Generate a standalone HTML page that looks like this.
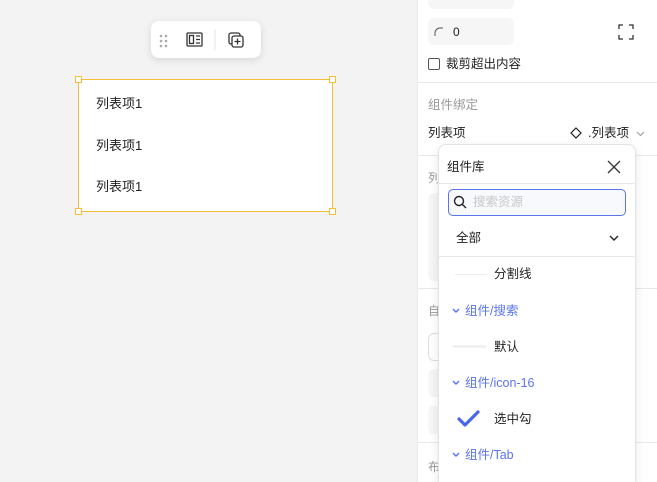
<!DOCTYPE html><html><head><style>
*{margin:0;padding:0;box-sizing:border-box}
html{width:657px;height:482px;overflow:hidden}
body{width:657px;height:482px;overflow:hidden;background:#f3f3f3;font-family:"Liberation Sans","Noto Sans CJK SC",sans-serif;font-size:12px;line-height:14px;color:#222;position:relative}
.a{position:absolute}
svg{display:block}
</style></head><body>
<div class="a" style="left:151px;top:21px;width:110px;height:37px;background:#fff;border-radius:8px;box-shadow:0 2px 8px rgba(0,0,0,.12)"></div>
<svg class="a" style="left:151px;top:21px" width="110" height="37">
<g fill="#aaa"><circle cx="10" cy="15" r="1.3"/><circle cx="15" cy="15" r="1.3"/><circle cx="10" cy="20" r="1.3"/><circle cx="15" cy="20" r="1.3"/><circle cx="10" cy="25" r="1.3"/><circle cx="15" cy="25" r="1.3"/></g>
<g fill="none" stroke="#333" stroke-width="1.3"><rect x="36" y="12" width="15" height="13" rx="1"/><rect x="38.5" y="14.5" width="4" height="8"/><path d="M45 15h4M45 18.5h4M45 22h4"/>
<rect x="78" y="12" width="11" height="11" rx="2"/><rect x="81" y="15" width="11" height="11" rx="2" fill="#fff"/><path d="M86.5 17.5v6M83.5 20.5h6"/></g>
<path d="M64 8v21" stroke="#e5e5e5"/></svg>
<div class="a" style="left:78px;top:79px;width:255px;height:133px;background:#fff;border:1px solid #f5bd3a"></div>
<div class="a" style="left:75px;top:76px;width:7px;height:7px;background:#fff;border:1px solid #f5bd3a"></div>
<div class="a" style="left:329px;top:76px;width:7px;height:7px;background:#fff;border:1px solid #f5bd3a"></div>
<div class="a" style="left:75px;top:208px;width:7px;height:7px;background:#fff;border:1px solid #f5bd3a"></div>
<div class="a" style="left:329px;top:208px;width:7px;height:7px;background:#fff;border:1px solid #f5bd3a"></div>
<div class="a" style="left:96px;top:97px;font-size:13px">列表项1</div>
<div class="a" style="left:96px;top:139px;font-size:13px">列表项1</div>
<div class="a" style="left:96px;top:180px;font-size:13px">列表项1</div>

<div class="a" style="left:417px;top:0;width:240px;height:482px;background:#fff;border-left:1px solid #e8e8e8"></div>
<div class="a" style="left:428px;top:0;width:86px;height:9px;background:#f6f6f7;border-radius:0 0 6px 6px"></div>
<div class="a" style="left:428px;top:18px;width:86px;height:27px;background:#f6f6f7;border-radius:6px"></div>
<svg class="a" style="left:434px;top:27px" width="10" height="10"><path d="M1 9V6a5 5 0 0 1 5-5h3" stroke="#555" fill="none"/></svg>
<div class="a" style="left:453px;top:25px;font-size:12px">0</div>
<svg class="a" style="left:618px;top:24px" width="16" height="16"><path d="M1 5V1h4M11 1h4v4M15 11v4h-4M5 15H1v-4" stroke="#333" fill="none" stroke-width="1.3"/></svg>
<div class="a" style="left:428px;top:58px;width:12px;height:12px;border:1px solid #555;border-radius:2px"></div>
<div class="a" style="left:446px;top:57px;font-size:12.5px">裁剪超出内容</div>
<div class="a" style="left:418px;top:82px;width:239px;height:1px;background:#e8e8e8"></div>
<div class="a" style="left:428px;top:98px;color:#999;font-size:12.5px">组件绑定</div>
<div class="a" style="left:428px;top:126px;font-size:12.5px">列表项</div>
<svg class="a" style="left:570px;top:127px" width="12" height="12"><path d="M6 1l5 5-5 5-5-5z" stroke="#222" fill="none" stroke-width="1.2"/></svg>
<div class="a" style="left:588px;top:126px;font-size:12.5px">.列表项</div>
<svg class="a" style="left:636px;top:131px" width="9" height="6"><path d="M1 1l3.5 3.5L8 1" stroke="#999" fill="none"/></svg>
<div class="a" style="left:418px;top:155px;width:239px;height:1px;background:#e8e8e8"></div>
<div class="a" style="left:428px;top:171px;color:#999">列</div>
<div class="a" style="left:428px;top:193px;width:203px;height:88px;background:#f6f6f7;border-radius:6px"></div>
<div class="a" style="left:418px;top:288px;width:239px;height:1px;background:#e8e8e8"></div>
<div class="a" style="left:428px;top:304px;color:#999">自</div>
<div class="a" style="left:428px;top:333px;width:20px;height:28px;border:1px solid #ddd;border-radius:6px"></div>
<div class="a" style="left:428px;top:369px;width:20px;height:28px;background:#f6f6f7;border-radius:6px"></div>
<div class="a" style="left:428px;top:406px;width:20px;height:28px;background:#f6f6f7;border-radius:6px"></div>
<div class="a" style="left:418px;top:442px;width:239px;height:1px;background:#e8e8e8"></div>
<div class="a" style="left:428px;top:460px;color:#999">布</div>

<div class="a" style="left:438px;top:144px;width:198px;height:345px;background:#fff;border:1px solid #e3e3e3;border-radius:8px;box-shadow:0 3px 10px rgba(0,0,0,.1)"></div>
<div class="a" style="left:447px;top:160px;font-size:12.5px">组件库</div>
<svg class="a" style="left:607px;top:160px" width="14" height="14"><path d="M1 1l12 12M13 1L1 13" stroke="#333" stroke-width="1.3"/></svg>
<div class="a" style="left:438px;top:183px;width:198px;height:1px;background:#e8e8e8"></div>
<div class="a" style="left:448px;top:189px;width:178px;height:27px;border:1px solid #5b74f0;border-radius:5px;background:#f8f9fc"></div>
<svg class="a" style="left:453px;top:195px" width="14" height="14"><circle cx="6" cy="6" r="4.5" stroke="#222" fill="none" stroke-width="1.4"/><path d="M9.5 9.5L13 13" stroke="#222" stroke-width="1.4"/></svg>
<div class="a" style="left:473px;top:195px;color:#c8c8c8;font-size:12.5px">搜索资源</div>
<div class="a" style="left:456px;top:231px;font-size:12.5px">全部</div>
<svg class="a" style="left:609px;top:235px" width="10" height="7"><path d="M1 1l4 4 4-4" stroke="#222" fill="none" stroke-width="1.4"/></svg>
<div class="a" style="left:438px;top:256px;width:198px;height:1px;background:#e8e8e8"></div>
<div class="a" style="left:455px;top:274px;width:32px;height:1px;background:#eee"></div>
<div class="a" style="left:494px;top:267px;font-size:12.5px">分割线</div>
<svg class="a" style="left:452px;top:308px" width="8" height="6"><path d="M1 1l3 3 3-3" stroke="#5b74f0" fill="none" stroke-width="1.4"/></svg>
<div class="a" style="left:465px;top:304px;color:#5b74f0;font-size:12.5px">组件/搜索</div>
<div class="a" style="left:453px;top:345px;width:33px;height:3px;background:#f1f1f1"></div>
<div class="a" style="left:494px;top:340px;font-size:12.5px">默认</div>
<svg class="a" style="left:452px;top:380px" width="8" height="6"><path d="M1 1l3 3 3-3" stroke="#5b74f0" fill="none" stroke-width="1.4"/></svg>
<div class="a" style="left:465px;top:376px;color:#5b74f0;font-size:12.5px">组件/icon-16</div>
<svg class="a" style="left:457px;top:409px" width="24" height="20"><path d="M2 10l6 6L21 3" stroke="#4a66ee" fill="none" stroke-width="3.2" stroke-linecap="round" stroke-linejoin="round"/></svg>
<div class="a" style="left:494px;top:412px;font-size:12.5px">选中勾</div>
<svg class="a" style="left:452px;top:452px" width="8" height="6"><path d="M1 1l3 3 3-3" stroke="#5b74f0" fill="none" stroke-width="1.4"/></svg>
<div class="a" style="left:465px;top:448px;color:#5b74f0;font-size:12.5px">组件/Tab</div>
</body></html>
